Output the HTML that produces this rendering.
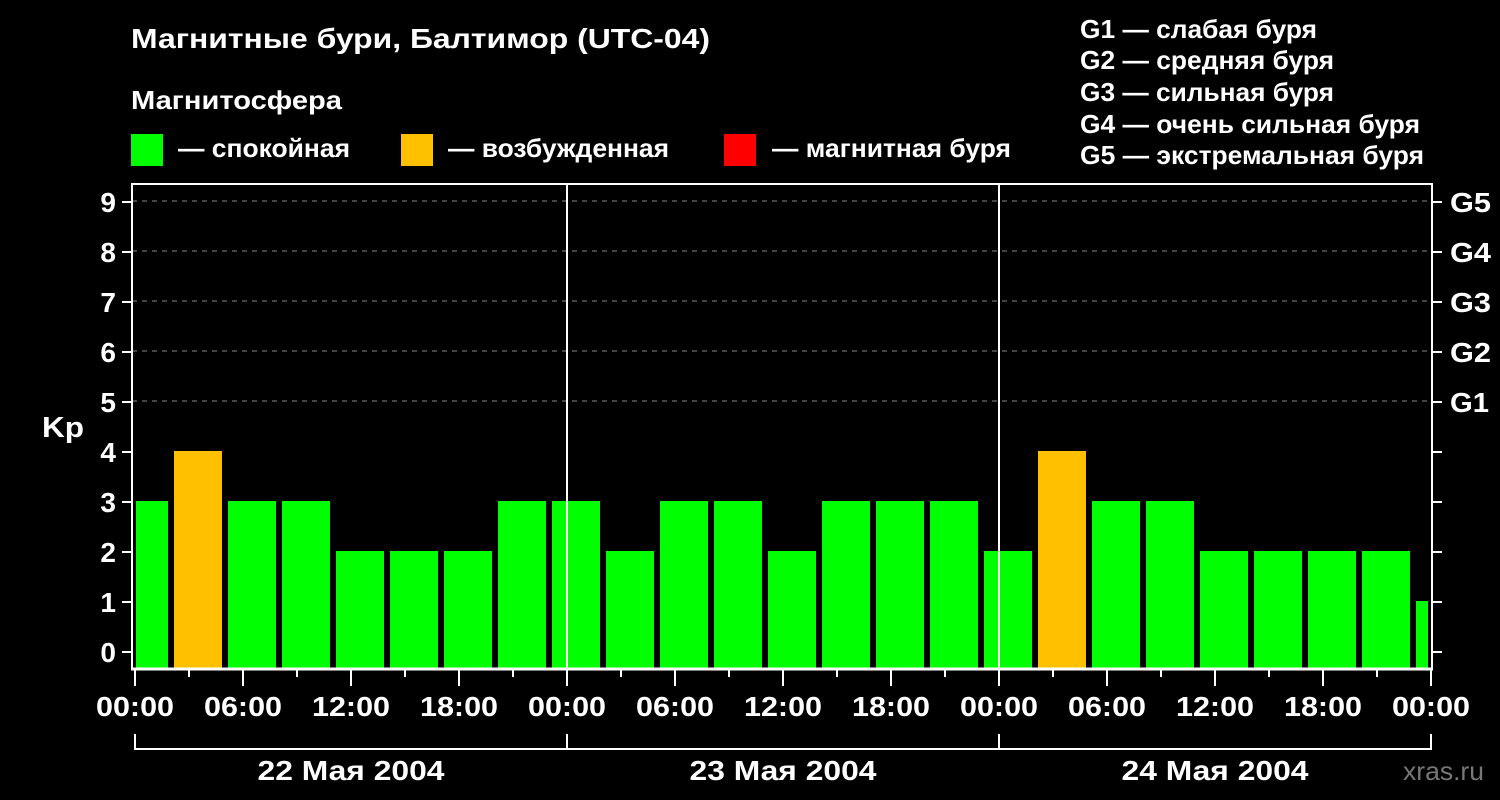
<!DOCTYPE html>
<html><head><meta charset="utf-8"><style>
html,body{margin:0;padding:0;background:#000;}
svg{display:block;}
text{font-family:"Liberation Sans",Arial,sans-serif;font-weight:bold;fill:#fff;}
</style></head><body>
<svg width="1500" height="800" viewBox="0 0 1500 800">
<rect width="1500" height="800" fill="#000"/>
<text x="131" y="48" font-size="28" textLength="579" lengthAdjust="spacingAndGlyphs">Магнитные бури, Балтимор (UTC-04)</text>
<text x="131" y="109" font-size="26" textLength="211" lengthAdjust="spacingAndGlyphs">Магнитосфера</text>
<rect x="131" y="134" width="32" height="32" fill="#00ff00"/>
<text x="178" y="157" font-size="26" textLength="172" lengthAdjust="spacingAndGlyphs">— спокойная</text>
<rect x="401" y="134" width="32" height="32" fill="#ffc000"/>
<text x="448" y="157" font-size="26" textLength="221" lengthAdjust="spacingAndGlyphs">— возбужденная</text>
<rect x="724" y="134" width="32" height="32" fill="#ff0000"/>
<text x="772" y="157" font-size="26" textLength="239" lengthAdjust="spacingAndGlyphs">— магнитная буря</text>
<g font-size="26" lengthAdjust="spacingAndGlyphs">
<text x="1080" y="38" textLength="237" lengthAdjust="spacingAndGlyphs">G1 — слабая буря</text>
<text x="1080" y="69" textLength="254" lengthAdjust="spacingAndGlyphs">G2 — средняя буря</text>
<text x="1080" y="101" textLength="254" lengthAdjust="spacingAndGlyphs">G3 — сильная буря</text>
<text x="1080" y="133" textLength="340" lengthAdjust="spacingAndGlyphs">G4 — очень сильная буря</text>
<text x="1080" y="164" textLength="344" lengthAdjust="spacingAndGlyphs">G5 — экстремальная буря</text>
</g>
<g stroke="#888" stroke-width="1" stroke-dasharray="5,5">
<line x1="132" y1="201" x2="1432" y2="201"/>
<line x1="132" y1="251" x2="1432" y2="251"/>
<line x1="132" y1="301" x2="1432" y2="301"/>
<line x1="132" y1="351" x2="1432" y2="351"/>
<line x1="132" y1="401" x2="1432" y2="401"/>
</g>
<g fill="#00ff00">
<rect x="136" y="501" width="32" height="167"/>
<rect x="174" y="451" width="48" height="217" fill="#ffc000"/>
<rect x="228" y="501" width="48" height="167"/>
<rect x="282" y="501" width="48" height="167"/>
<rect x="336" y="551" width="48" height="117"/>
<rect x="390" y="551" width="48" height="117"/>
<rect x="444" y="551" width="48" height="117"/>
<rect x="498" y="501" width="48" height="167"/>
<rect x="552" y="501" width="48" height="167"/>
<rect x="606" y="551" width="48" height="117"/>
<rect x="660" y="501" width="48" height="167"/>
<rect x="714" y="501" width="48" height="167"/>
<rect x="768" y="551" width="48" height="117"/>
<rect x="822" y="501" width="48" height="167"/>
<rect x="876" y="501" width="48" height="167"/>
<rect x="930" y="501" width="48" height="167"/>
<rect x="984" y="551" width="48" height="117"/>
<rect x="1038" y="451" width="48" height="217" fill="#ffc000"/>
<rect x="1092" y="501" width="48" height="167"/>
<rect x="1146" y="501" width="48" height="167"/>
<rect x="1200" y="551" width="48" height="117"/>
<rect x="1254" y="551" width="48" height="117"/>
<rect x="1308" y="551" width="48" height="117"/>
<rect x="1362" y="551" width="48" height="117"/>
<rect x="1416" y="601" width="12" height="67"/>
</g>
<g stroke="#fff" stroke-width="2" fill="none">
<line x1="567" y1="183" x2="567" y2="668"/>
<line x1="999" y1="183" x2="999" y2="668"/>
<polyline points="132,668 132,184 1432,184 1432,668"/>
<line x1="131" y1="669" x2="1433" y2="669" stroke-width="3"/>
</g>
<g stroke="#fff" stroke-width="2">
<line x1="122" y1="652" x2="131" y2="652"/><line x1="1433" y1="652" x2="1442" y2="652"/>
<line x1="122" y1="602" x2="131" y2="602"/><line x1="1433" y1="602" x2="1442" y2="602"/>
<line x1="122" y1="552" x2="131" y2="552"/><line x1="1433" y1="552" x2="1442" y2="552"/>
<line x1="122" y1="502" x2="131" y2="502"/><line x1="1433" y1="502" x2="1442" y2="502"/>
<line x1="122" y1="452" x2="131" y2="452"/><line x1="1433" y1="452" x2="1442" y2="452"/>
<line x1="122" y1="402" x2="131" y2="402"/><line x1="1433" y1="402" x2="1442" y2="402"/>
<line x1="122" y1="352" x2="131" y2="352"/><line x1="1433" y1="352" x2="1442" y2="352"/>
<line x1="122" y1="302" x2="131" y2="302"/><line x1="1433" y1="302" x2="1442" y2="302"/>
<line x1="122" y1="252" x2="131" y2="252"/><line x1="1433" y1="252" x2="1442" y2="252"/>
<line x1="122" y1="202" x2="131" y2="202"/><line x1="1433" y1="202" x2="1442" y2="202"/>
<line x1="135" y1="670" x2="135" y2="686"/><line x1="189" y1="670" x2="189" y2="677"/>
<line x1="243" y1="670" x2="243" y2="686"/><line x1="297" y1="670" x2="297" y2="677"/>
<line x1="351" y1="670" x2="351" y2="686"/><line x1="405" y1="670" x2="405" y2="677"/>
<line x1="459" y1="670" x2="459" y2="686"/><line x1="513" y1="670" x2="513" y2="677"/>
<line x1="567" y1="670" x2="567" y2="686"/><line x1="621" y1="670" x2="621" y2="677"/>
<line x1="675" y1="670" x2="675" y2="686"/><line x1="729" y1="670" x2="729" y2="677"/>
<line x1="783" y1="670" x2="783" y2="686"/><line x1="837" y1="670" x2="837" y2="677"/>
<line x1="891" y1="670" x2="891" y2="686"/><line x1="945" y1="670" x2="945" y2="677"/>
<line x1="999" y1="670" x2="999" y2="686"/><line x1="1053" y1="670" x2="1053" y2="677"/>
<line x1="1107" y1="670" x2="1107" y2="686"/><line x1="1161" y1="670" x2="1161" y2="677"/>
<line x1="1215" y1="670" x2="1215" y2="686"/><line x1="1269" y1="670" x2="1269" y2="677"/>
<line x1="1323" y1="670" x2="1323" y2="686"/><line x1="1377" y1="670" x2="1377" y2="677"/>
<line x1="1431" y1="670" x2="1431" y2="686"/>
<polyline points="135,734 135,749 1431,749 1431,734" fill="none"/>
<line x1="567" y1="734" x2="567" y2="749"/>
<line x1="999" y1="734" x2="999" y2="749"/>
</g>
<g font-size="28" text-anchor="end">
<text x="116" y="662">0</text><text x="116" y="612">1</text><text x="116" y="562">2</text>
<text x="116" y="512">3</text><text x="116" y="462">4</text><text x="116" y="412">5</text>
<text x="116" y="362">6</text><text x="116" y="312">7</text><text x="116" y="262">8</text>
<text x="116" y="212">9</text>
</g>
<text x="42" y="437" font-size="29" textLength="42" lengthAdjust="spacingAndGlyphs">Kp</text>
<g font-size="28">
<text x="1450" y="412" textLength="39" lengthAdjust="spacingAndGlyphs">G1</text>
<text x="1450" y="362" textLength="41" lengthAdjust="spacingAndGlyphs">G2</text>
<text x="1450" y="312" textLength="41" lengthAdjust="spacingAndGlyphs">G3</text>
<text x="1450" y="262" textLength="41" lengthAdjust="spacingAndGlyphs">G4</text>
<text x="1450" y="212" textLength="41" lengthAdjust="spacingAndGlyphs">G5</text>
</g>
<g font-size="28" text-anchor="middle">
<text x="135" y="716" textLength="78" lengthAdjust="spacingAndGlyphs">00:00</text>
<text x="243" y="716" textLength="78" lengthAdjust="spacingAndGlyphs">06:00</text>
<text x="351" y="716" textLength="78" lengthAdjust="spacingAndGlyphs">12:00</text>
<text x="459" y="716" textLength="78" lengthAdjust="spacingAndGlyphs">18:00</text>
<text x="567" y="716" textLength="78" lengthAdjust="spacingAndGlyphs">00:00</text>
<text x="675" y="716" textLength="78" lengthAdjust="spacingAndGlyphs">06:00</text>
<text x="783" y="716" textLength="78" lengthAdjust="spacingAndGlyphs">12:00</text>
<text x="891" y="716" textLength="78" lengthAdjust="spacingAndGlyphs">18:00</text>
<text x="999" y="716" textLength="78" lengthAdjust="spacingAndGlyphs">00:00</text>
<text x="1107" y="716" textLength="78" lengthAdjust="spacingAndGlyphs">06:00</text>
<text x="1215" y="716" textLength="78" lengthAdjust="spacingAndGlyphs">12:00</text>
<text x="1323" y="716" textLength="78" lengthAdjust="spacingAndGlyphs">18:00</text>
<text x="1431" y="716" textLength="78" lengthAdjust="spacingAndGlyphs">00:00</text>
<text x="351" y="780" textLength="187" lengthAdjust="spacingAndGlyphs">22 Мая 2004</text>
<text x="783" y="780" textLength="187" lengthAdjust="spacingAndGlyphs">23 Мая 2004</text>
<text x="1215" y="780" textLength="187" lengthAdjust="spacingAndGlyphs">24 Мая 2004</text>
</g>
<text x="1403" y="780" font-size="26" textLength="81" lengthAdjust="spacingAndGlyphs" style="fill:#777;font-weight:normal">xras.ru</text>
</svg>
</body></html>
